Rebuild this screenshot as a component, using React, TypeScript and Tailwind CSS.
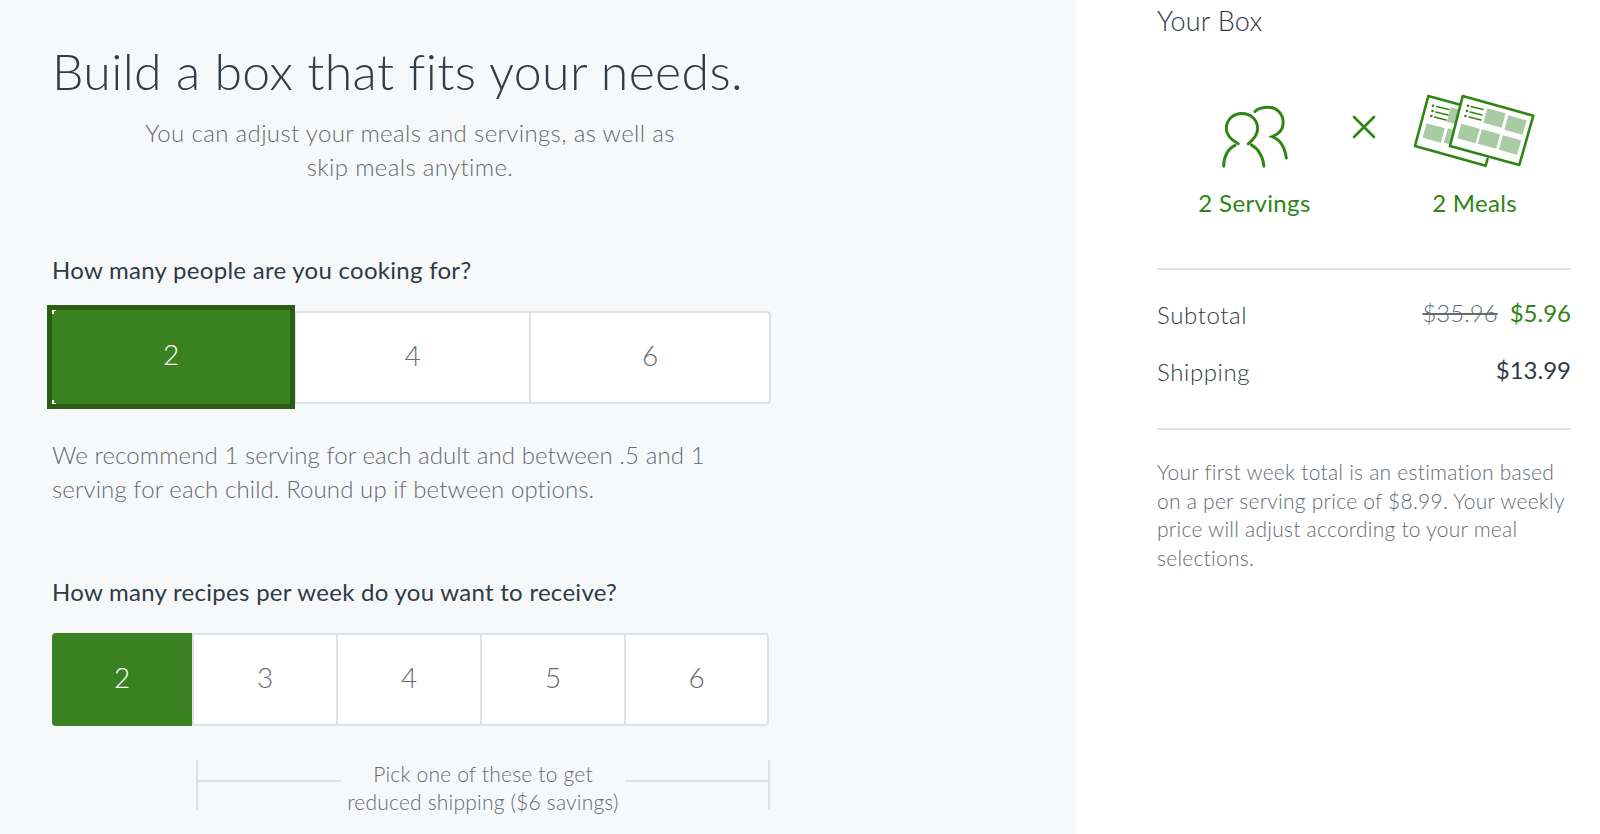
const font = { fontFamily: 'Lato, "Liberation Sans", sans-serif' }

function PeopleIcon() {
  return (
    <svg width="94" height="84" viewBox="0 0 90 80" fill="none" stroke="#2f8512" strokeWidth="2.8" strokeLinecap="round">
      <path d="M29 47.5C21 43 17.5 38 17.5 33C17.5 24.5 24 18.5 32.5 18.5C41 18.5 47.5 24.5 47.5 33C47.5 38 44 43 38.5 47.5" />
      <path d="M26 49C19 52 15 60 15 69" />
      <path d="M41.5 48.5C48 52 53 60 53.5 69" />
      <path d="M45 16.5C48 13.5 53 12.5 58 12.5C66 12.5 72 19 72 27C72 33 68 38 61.5 40.5C68 43 73.5 50 75 61" />
    </svg>
  )
}

function Tile({ x, y }: { x: number; y: number }) {
  return <rect x="-9.5" y="-7.5" width="19" height="15" fill="#a8cba3" stroke="none" transform={`translate(${x} ${y}) rotate(15.6)`} />
}

function MealsIcon() {
  return (
    <svg width="150" height="90" viewBox="0 0 150 90" fill="none" stroke="#2f8512" strokeLinecap="round">
      <Tile x={33.7} y={48} />
      <Tile x={55} y={53} />
      <Tile x={58} y={32} />
      <path d="M63 20.5L28.3 11L15 61L85.7 80.7L87.5 74" strokeWidth="2.6" strokeLinejoin="round" />
      <circle cx="33" cy="20.7" r="1.3" fill="#2f8512" stroke="none" />
      <circle cx="32.5" cy="26" r="1.3" fill="#2f8512" stroke="none" />
      <circle cx="31.3" cy="31" r="1.3" fill="#2f8512" stroke="none" />
      <path d="M36.5 21.5L49 24.5M35.5 27L48 30M34.5 32L46 35" strokeWidth="1.4" />
      <path d="M62.7 11L133.3 30.7L119.3 80L50 61Z" fill="#fff" strokeWidth="2.6" strokeLinejoin="round" />
      <Tile x={94.5} y={33} />
      <Tile x={115.5} y={40} />
      <Tile x={68.5} y={48.5} />
      <Tile x={89} y={54} />
      <Tile x={110} y={60} />
      <circle cx="68" cy="20.7" r="1.3" fill="#2f8512" stroke="none" />
      <circle cx="67" cy="26" r="1.3" fill="#2f8512" stroke="none" />
      <circle cx="65.5" cy="31" r="1.3" fill="#2f8512" stroke="none" />
      <path d="M71 21.5L83 24.5M70 27L82 30M69 32L81 35" strokeWidth="1.4" />
    </svg>
  )
}

function OptionRow({ options, widths, className }: { options: string[]; widths: string[]; className: string }) {
  return (
    <div className={`flex bg-white rounded-[4px] border-2 border-[#dfe2e5] ${className}`}>
      {options.map((opt, i) => (
        <div key={i} className={`${widths[i]} flex items-center justify-center pb-[5px] text-[28px] font-light text-[#646b72] ${i > 0 ? 'border-l-2 border-[#dfe2e5]' : ''}`}>
          {opt}
        </div>
      ))}
    </div>
  )
}

export default function App() {
  return (
    <div style={font} className="flex w-[1600px] h-[834px] overflow-hidden bg-white text-[#2f3a45]">
      {/* Left panel */}
      <div className="w-[1077px] h-full bg-[#f7f8fa] pl-[52px]">
        <h1 className="mt-[39px] text-[50px] leading-[64px] font-light tracking-[0.36px] text-[#323c46]">Build a box that fits your needs.</h1>
        <p className="mt-[13px] w-[716px] text-center text-[24px] leading-[34px] font-light tracking-[0.36px] text-[#646b72]">
          You can adjust your meals and servings, as well as<br />skip meals anytime.
        </p>

        <h2 className="mt-[70px] text-[24px] leading-[32px] tracking-[0.28px] text-[#2f3a45]">How many people are you cooking for?</h2>
        <div className="relative mt-[25px] w-[719px] h-[93px]">
          <OptionRow options={['', '4', '6']} widths={['w-[240px]', 'w-[235px]', 'flex-1']} className="h-full" />
          <div className="absolute left-[-5px] top-[-6px] w-[248px] h-[104px] bg-[#3a8122] border-[5px] border-[#2a5e14] flex items-center justify-center pb-[6px] text-[28px] font-light text-white">
            2
            <span className="absolute left-0 top-0 w-[4px] h-[4px] border-l-2 border-t border-white" />
            <span className="absolute left-0 bottom-0 w-[4px] h-[4px] border-l-2 border-b border-white" />
          </div>
        </div>
        <p className="mt-[34px] w-[700px] text-[24px] leading-[34px] font-light tracking-[0.1px] text-[#646b72]">
          We recommend 1 serving for each adult and between .5 and 1<br />serving for each child. Round up if between options.
        </p>

        <h2 className="mt-[70px] text-[24px] leading-[32px] tracking-[0.28px] text-[#2f3a45]">How many recipes per week do you want to receive?</h2>
        <div className="relative mt-[25px] w-[717px] h-[93px]">
          <OptionRow options={['', '3', '4', '5', '6']} widths={['w-[138px]', 'w-[144px]', 'w-[144px]', 'w-[144px]', 'flex-1']} className="h-full" />
          <div className="absolute left-0 top-0 w-[140px] h-full bg-[#3a8122] rounded-l-[4px] flex items-center justify-center pb-[5px] text-[28px] font-light text-white">2</div>
        </div>

        <div className="mt-[34px] ml-[144px] w-[574px] h-[50px] flex items-start border-x-2 border-[#dfe2e5]">
          <div className="mt-[20px] w-[143px] h-[2px] bg-[#dfe2e5]" />
          <div className="flex-1 text-center text-[21px] leading-[28px] font-light tracking-[0.2px] text-[#646b72] whitespace-nowrap">
            Pick one of these to get<br />reduced shipping ($6 savings)
          </div>
          <div className="mt-[20px] w-[143px] h-[2px] bg-[#dfe2e5]" />
        </div>
      </div>

      {/* Your box */}
      <div className="ml-[80px] w-[414px]">
        <div className="mt-[5px] text-[27px] leading-[32px] font-light tracking-[0.25px] text-[#2f3a45]">Your Box</div>
        <div className="mt-[48px] flex h-[184px]">
          <div className="w-[195px] pt-[9px] flex flex-col items-center">
            <PeopleIcon />
            <span className="mt-[10px] text-[24px] leading-[30px] tracking-[0.35px] text-[#2f8512]">2 Servings</span>
          </div>
          <svg className="mt-[30px]" width="24" height="24" viewBox="0 0 24 24" fill="none" stroke="#2f8512" strokeWidth="2.6" strokeLinecap="round">
            <path d="M2 2L22 22M22 2L2 22" />
          </svg>
          <div className="flex-1 flex flex-col items-center pl-[2px]">
            <MealsIcon />
            <span className="mt-[13px] text-[24px] leading-[30px] tracking-[0.3px] text-[#2f8512]">2 Meals</span>
          </div>
        </div>
        <div className="h-[2px] mt-[-1px] bg-[#dfe2e5]" />
        <div className="mt-[31px] flex justify-between items-center h-[28px]">
          <span className="text-[24px] font-light tracking-[0.6px]">Subtotal</span>
          <span className="text-[24px] pb-[4px]">
            <span className="font-light line-through text-[#646b72]">$35.96</span>
            <span className="ml-[12px] text-[#2f8512]">$5.96</span>
          </span>
        </div>
        <div className="mt-[29px] flex justify-between items-center h-[28px]">
          <span className="text-[24px] font-light tracking-[0.6px]">Shipping</span>
          <span className="text-[24px] pb-[4px]">$13.99</span>
        </div>
        <div className="h-[2px] mt-[42px] bg-[#dfe2e5]" />
        <p className="mt-[28px] text-[21px] leading-[28.5px] font-light tracking-[0.25px] text-[#646b72]">
          Your first week total is an estimation based<br />on a per serving price of $8.99. Your weekly<br />price will adjust according to your meal<br />selections.
        </p>
      </div>
    </div>
  )
}
